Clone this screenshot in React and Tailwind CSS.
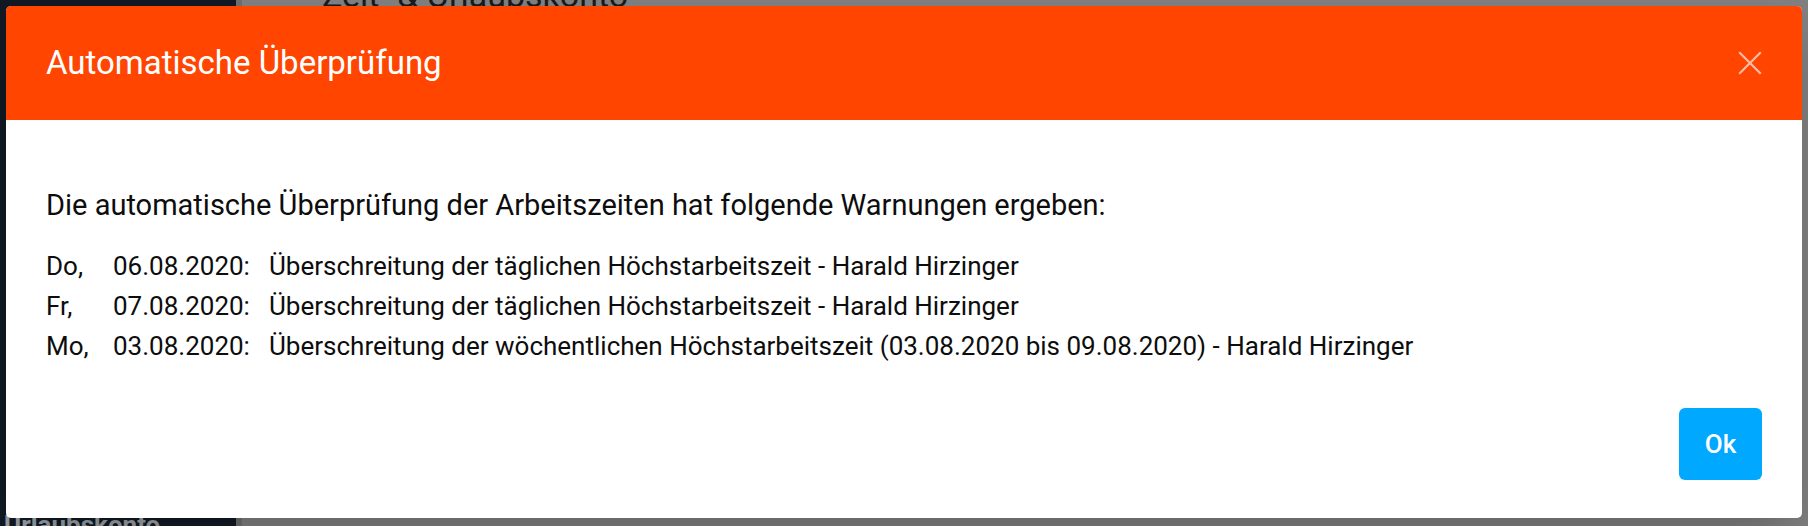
import React from "react";

const warnings = [
    { day: "Do,", date: "06.08.2020:", text: "Überschreitung der täglichen Höchstarbeitszeit - Harald Hirzinger" },
    { day: "Fr,", date: "07.08.2020:", text: "Überschreitung der täglichen Höchstarbeitszeit - Harald Hirzinger" },
    { day: "Mo,", date: "03.08.2020:", text: "Überschreitung der wöchentlichen Höchstarbeitszeit (03.08.2020 bis 09.08.2020) - Harald Hirzinger" },
];

const App = () => {
    return (
        <div className="relative w-full h-[526px] overflow-hidden font-['Roboto',sans-serif]">
            {/* page behind the dialog */}
            <div className="flex h-full">
                <div className="w-[236px] h-full bg-[#111a24] flex flex-col justify-end">
                    <div className="text-[#9aa0a6] text-[26px] font-bold leading-none pl-[4px] -mb-[12px]">Urlaubskonto</div>
                </div>
                <div className="flex-1 h-full bg-[#808080] border-l-[6px] border-[#6f6f6f]">
                    <div className="pl-[80px] -mt-[22px] text-[#1a1a1a] text-[34px] leading-none">Zeit- &amp; Urlaubskonto</div>
                </div>
            </div>

            {/* dialog */}
            <div className="absolute left-[6px] top-[6px] w-[1796px] h-[512px] bg-white rounded-[5px] overflow-hidden shadow-2xl flex flex-col">
                <div className="h-[114px] bg-[#ff4500] flex items-center justify-between pl-[40px] pr-[40px]">
                    <h2 className="text-white text-[33px] font-normal">Automatische Überprüfung</h2>
                    <button className="w-[24px] h-[24px] flex items-center justify-center">
                        <svg width="24" height="24" viewBox="0 0 24 24" fill="none" stroke="#ffbda6" strokeWidth="2.2" strokeLinecap="square">
                            <path d="M2 2 L22 22 M22 2 L2 22" />
                        </svg>
                    </button>
                </div>

                <div className="px-[40px] pt-[63px] text-[#0d0d0d]">
                    <p className="text-[29px] leading-[44px]">
                        Die automatische Überprüfung der Arbeitszeiten hat folgende Warnungen ergeben:
                    </p>
                    <div className="mt-[19px] grid grid-cols-[67px_156px_1fr] text-[26px] leading-[40px]">
                        {warnings.map((w) => (
                            <React.Fragment key={w.day}>
                                <span>{w.day}</span>
                                <span>{w.date}</span>
                                <span>{w.text}</span>
                            </React.Fragment>
                        ))}
                    </div>
                </div>

                <div className="flex justify-end px-[40px] mt-[42px]">
                    <button className="w-[83px] h-[72px] rounded-[6px] bg-[#00a8ff] text-white text-[26px] font-medium">Ok</button>
                </div>
            </div>
        </div>
    );
};

export default App;
